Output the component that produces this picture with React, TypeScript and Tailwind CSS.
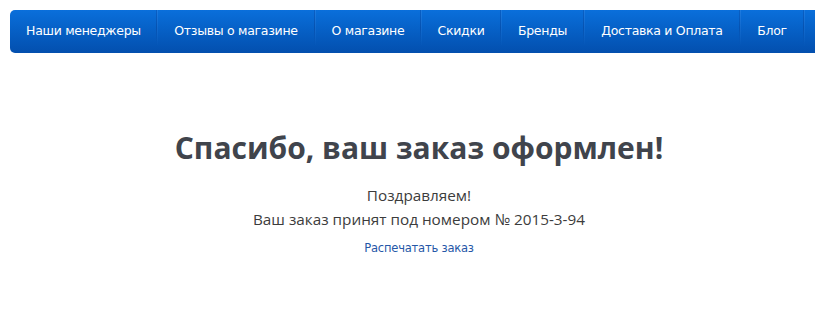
import React from 'react';

const menu = [
  { label: 'Наши менеджеры', w: 'w-[147px]' },
  { label: 'Отзывы о магазине', w: 'w-[158px]' },
  { label: 'О магазине', w: 'w-[106px]' },
  { label: 'Скидки', w: 'w-[80px]' },
  { label: 'Бренды', w: 'w-[83px]' },
  { label: 'Доставка и Оплата', w: 'w-[156px]' },
  { label: 'Блог', w: 'w-[64px]' },
];

export default function App() {
  return (
    <div className="w-full min-h-[335px] bg-white overflow-hidden">
      <div className="ml-[10px] w-[818px] pt-[10px]">
        {/* Top menu */}
        <nav className="flex h-[43px] rounded-l-[5px] bg-gradient-to-b from-[#0a6fdb] to-[#034fae]">
          {menu.map((item) => (
            <a
              key={item.label}
              href="#"
              className={`${item.w} shrink-0 flex items-center justify-center relative text-white text-[12.5px] font-['DejaVu_Sans',sans-serif] tracking-[-0.3px] pb-[1px]`}
            >
              {item.label}
              <span className="absolute right-0 top-0 h-[36px] w-px bg-gradient-to-b from-[#0a5fc4] via-[#0652b0] to-transparent" />
              <span className="absolute right-[-1px] top-0 h-[36px] w-px bg-gradient-to-b from-[#2a83e4] via-[#1a6fd0] to-transparent opacity-60" />
            </a>
          ))}
        </nav>

        {/* Content */}
        <div className="flex flex-col items-center pt-[77px]">
          <h1 className="text-[30px] leading-[36px] font-bold text-[#40444c] font-['Open_Sans',sans-serif]">
            Спасибо, ваш заказ оформлен!
          </h1>
          <div className="mt-[17px] flex flex-col items-center text-[15.3px] leading-[24px] text-[#3c3c3c] font-['Open_Sans',sans-serif]">
            <p>Поздравляем!</p>
            <p>Ваш заказ принят под номером № 2015-3-94</p>
          </div>
          <a
            href="#"
            className="mt-[10px] text-[11.5px] leading-[14px] text-[#2557a7] font-['DejaVu_Sans',sans-serif] tracking-[-0.2px]"
          >
            Распечатать заказ
          </a>
        </div>
      </div>
    </div>
  );
}
